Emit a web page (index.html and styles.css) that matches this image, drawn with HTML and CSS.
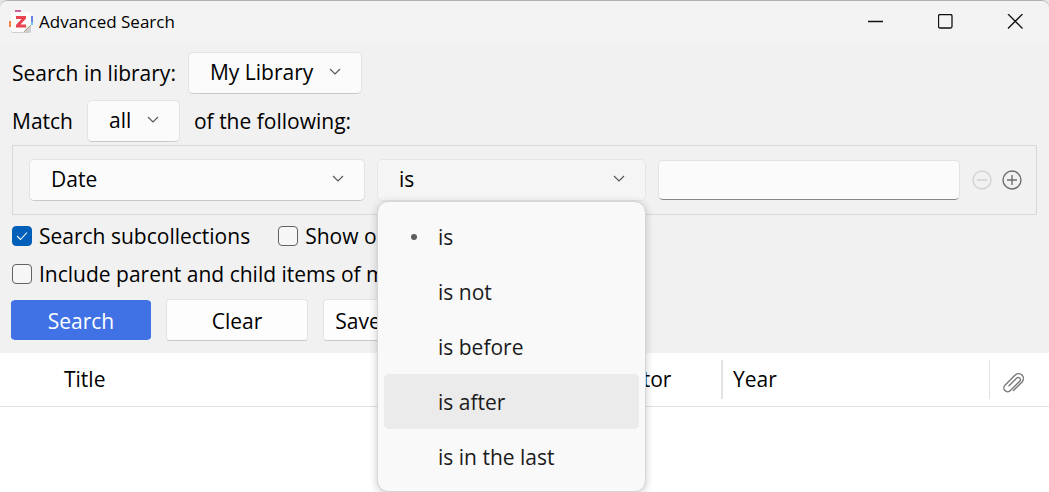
FILE: index.html
```html
<!DOCTYPE html>
<html lang="en">
<head>
<meta charset="utf-8">
<title>Advanced Search</title>
<link rel="stylesheet" href="styles.css">
</head>
<body>
<div class="window">
  <header class="titlebar">
    <svg class="app-icon" viewBox="0 0 24 24" aria-hidden="true">
      <rect x="6" y="0" width="6" height="4" fill="#c9629b"/>
      <rect x="0" y="11" width="4" height="6" fill="#f4814a"/>
      <rect x="20" y="6" width="4" height="9" fill="#6a7ee0"/>
      <rect x="21" y="12" width="3" height="3" fill="#6ec6e8"/>
      <rect x="2" y="4" width="20" height="19" rx="2" fill="#cfcfcf"/>
      <path d="M4 2H20Q22 2 22 4V15L15 22H4Q2 22 2 20V4Q2 2 4 2Z" fill="#fbfbfb"/>
      <path d="M22 15L15 22Q17 19 16 16Q19 17 22 15Z" fill="#e3e3df"/>
      <path d="M22 15L15 22" stroke="#a8a28a" stroke-width="1"/>
      <path d="M7 6H17V8.500L11.500 14.500H17V17.500H7V15L12.500 9H7Z" fill="#e9434f"/>
    </svg>
    <h1 class="caption">Advanced Search</h1>
    <div class="window-controls">
      <button class="window-button" type="button" aria-label="Minimize">
        <svg class="window-glyph" viewBox="0 0 16 16"><path d="M0 7.500H15"/></svg>
      </button>
      <button class="window-button" type="button" aria-label="Maximize">
        <svg class="window-glyph" viewBox="0 0 16 16"><rect x=".5" y=".5" width="13.500" height="13.500" rx="1.500"/></svg>
      </button>
      <button class="window-button" type="button" aria-label="Close">
        <svg class="window-glyph" viewBox="0 0 16 16"><path d="M1 0L15.500 14.500M15.500 0L1 14.500"/></svg>
      </button>
    </div>
  </header>

  <form class="search-form">
    <div class="line library-line">
      <label for="library">Search in library:</label>
      <span class="dropdown">
        <select class="select" id="library"><option>My Library</option></select>
        <svg class="chevron" viewBox="0 0 12 8"><path d="M1 1L6 6L11 1"/></svg>
      </span>
    </div>
    <div class="line match-line">
      <label for="match">Match</label>
      <span class="dropdown">
        <select class="select" id="match"><option>all</option></select>
        <svg class="chevron" viewBox="0 0 12 8"><path d="M1 1L6 6L11 1"/></svg>
      </span>
      <span class="match-suffix">of the following:</span>
    </div>

    <div class="conditions">
      <span class="dropdown field">
        <select class="select" aria-label="Field"><option>Date</option></select>
        <svg class="chevron" viewBox="0 0 12 8"><path d="M1 1L6 6L11 1"/></svg>
      </span>
      <span class="dropdown operator">
        <select class="select open" aria-label="Operator"><option>is</option></select>
        <svg class="chevron" viewBox="0 0 12 8"><path d="M1 1L6 6L11 1"/></svg>
        <span class="menu" role="listbox" aria-label="Operator options">
          <button class="menu-item current" type="button" role="option" aria-selected="true">is</button>
          <button class="menu-item" type="button" role="option">is not</button>
          <button class="menu-item" type="button" role="option">is before</button>
          <button class="menu-item hovered" type="button" role="option">is after</button>
          <button class="menu-item" type="button" role="option">is in the last</button>
        </span>
      </span>
      <input class="value" type="text" aria-label="Value">
      <span class="row-buttons">
        <button class="round-button" type="button" aria-label="Remove condition" disabled>
          <svg class="round-glyph" viewBox="0 0 20 20"><circle cx="10" cy="10" r="9"/><path d="M5 10H15"/></svg>
        </button>
        <button class="round-button" type="button" aria-label="Add condition">
          <svg class="round-glyph" viewBox="0 0 20 20"><circle cx="10" cy="10" r="9"/><path d="M5 10H15M10 5V15"/></svg>
        </button>
      </span>
    </div>

    <div class="options">
      <label class="option"><span class="tick"><input class="checkbox" type="checkbox" checked><svg class="tick-mark" viewBox="0 0 12 10"><path d="M1 5L4.500 8.500L11 1.500"/></svg></span>Search subcollections</label>
      <label class="option"><input class="checkbox" type="checkbox">Show only top-level items</label>
    </div>
    <div class="options">
      <label class="option"><input class="checkbox" type="checkbox">Include parent and child items of matching items</label>
    </div>

    <div class="actions">
      <button class="button primary" type="button">Search</button>
      <button class="button" type="button">Clear</button>
      <button class="button save" type="button">Save Search</button>
    </div>
  </form>

  <main class="results">
    <table class="items">
      <thead>
        <tr>
          <th class="col-title" scope="col"><span class="head">Title</span></th>
          <th class="col-creator" scope="col"><span class="head">Creator</span></th>
          <th class="col-year" scope="col"><span class="head">Year</span></th>
          <th class="col-attachment" scope="col" aria-label="Attachments"><span class="head">
            <svg class="clip" viewBox="0 0 24 24"><path d="M11.500 20.500L20.300 11.700A4.900 4.900 0 0 0 13.400 4.800L3 15.200A3.800 3.800 0 0 0 8.400 20.600L17.900 11.100A2.200 2.200 0 0 0 14.800 8L7 15.800"/></svg>
          </span></th>
        </tr>
      </thead>
    </table>
  </main>
</div>
</body>
</html>
```
FILE: styles.css
```css
* {
  box-sizing: border-box;
}

body {
  margin: 0;
  background: #e4e4e4;
  color: #000;
  font: 21px/30px "Open Sans", "Noto Sans", sans-serif;
}

button,
input,
select {
  margin: 0;
  color: inherit;
  font: inherit;
}

.window {
  display: flex;
  flex-direction: column;
  min-height: 100vh;
  overflow: hidden;
  border-top: 1px solid #b0b0b0;
  border-radius: 8px 8px 0 0;
  background: #f1f1f1;
}

.titlebar {
  display: flex;
  align-items: center;
  height: 41px;
  padding-left: 9px;
  background: #f3f3f3;
}

.app-icon {
  width: 24px;
  height: 24px;
}

.caption {
  flex: 1;
  margin: 0 0 0 6px;
  font-size: 17px;
  font-weight: 400;
}

.window-controls {
  display: flex;
}

.window-button {
  display: grid;
  place-items: center;
  width: 70px;
  height: 40px;
  padding: 0;
  border: 0;
  background: none;
}

.window-button:last-child {
  width: 68px;
}

.window-glyph {
  width: 16px;
  height: 16px;
  fill: none;
  stroke: #111;
  stroke-width: 1.3;
}

.search-form {
  padding: 10px 12px 12px;
}

.line {
  display: flex;
  align-items: center;
}

.library-line {
  gap: 12px;
}

.match-line {
  gap: 14px;
  margin-top: 6px;
}

.dropdown {
  position: relative;
  display: grid;
  align-items: center;
}

.select {
  grid-area: 1 / 1;
  width: 100%;
  height: 42px;
  padding: 0 47px 2px 21px;
  border: 1px solid #e3e3e3;
  border-bottom-color: #c9c9c9;
  border-radius: 5px;
  background: #fbfbfb;
  appearance: none;
}

.select.open {
  border-color: #e6e6e6;
  background: #f5f5f5;
}

.chevron {
  grid-area: 1 / 1;
  justify-self: end;
  width: 12px;
  height: 8px;
  margin: 0 21px 3px 0;
  fill: none;
  stroke: #555;
  stroke-width: 1.1;
  pointer-events: none;
}

.conditions {
  display: grid;
  grid-template-columns: 336fr 269fr 302fr auto;
  gap: 12px;
  align-items: center;
  margin-top: 3px;
  padding: 13px 14px 13px 16px;
  border: 1px solid #d9d9d9;
}

.value {
  width: 100%;
  height: 40px;
  padding: 0 12px;
  border: 1px solid #e3e3e3;
  border-bottom-color: #868686;
  border-radius: 5px;
  background: #fbfbfb;
}

.row-buttons {
  display: flex;
  gap: 10px;
}

.round-button {
  display: grid;
  width: 20px;
  height: 20px;
  padding: 0;
  border: 0;
  background: none;
  color: #6e6e6e;
}

.round-button:disabled {
  color: #d2d2d2;
}

.round-glyph {
  width: 20px;
  height: 20px;
  fill: none;
  stroke: currentColor;
  stroke-width: 1.4;
}

.menu {
  position: absolute;
  z-index: 1;
  top: 100%;
  left: 0;
  width: 100%;
  padding: 7px 6px;
  border: 1px solid #d6d6d6;
  border-radius: 11px;
  background: #f9f9f9;
  box-shadow: 0 2px 8px rgba(0, 0, 0, 0.2);
  background-clip: padding-box;
}

.menu-item {
  display: flex;
  align-items: center;
  width: 100%;
  height: 55px;
  padding: 0 0 0 54px;
  border: 0;
  border-radius: 5px;
  background: none;
  color: #1b1b1b;
}

.menu-item.hovered {
  background: #ebebeb;
}

.menu-item.current {
  gap: 21px;
  padding-left: 27px;
}

.menu-item.current::before {
  width: 6px;
  height: 6px;
  border-radius: 50%;
  background: #5c5c5c;
  content: "";
}

.options {
  display: flex;
  gap: 28px;
  margin-top: 8px;
}

.conditions + .options {
  margin-top: 6px;
}

.option {
  display: flex;
  gap: 7px;
  align-items: center;
  white-space: nowrap;
}

.tick {
  display: grid;
  place-items: center;
}

.checkbox {
  grid-area: 1 / 1;
  width: 20px;
  height: 20px;
  border: 1px solid #626262;
  border-radius: 4px;
  background: #f6f6f6;
  appearance: none;
}

.checkbox:checked {
  border-color: #005fb8;
  background: #005fb8;
}

.tick-mark {
  grid-area: 1 / 1;
  width: 12px;
  height: 10px;
  fill: none;
  stroke: #fff;
  stroke-width: 1.1;
  pointer-events: none;
}

.actions {
  display: flex;
  gap: 15px;
  margin: 10px 0 0 -1px;
}

.button {
  min-width: 142px;
  height: 42px;
  padding: 2px 10px 0;
  border: 1px solid #e3e3e3;
  border-bottom-color: #c9c9c9;
  border-radius: 4px;
  background: #fdfdfd;
}

.button.primary {
  min-width: 140px;
  border-color: #f1f1f1;
  border-width: 1px 0;
  background: #4072e5;
  background-clip: padding-box;
  color: #fff;
}

.results {
  flex: 1;
  background: #fff;
}

.items {
  width: 100%;
  border-collapse: collapse;
  table-layout: fixed;
}

.items th {
  height: 53px;
  padding: 0;
  border-bottom: 1px solid #e0e0e0;
  font-weight: 400;
  text-align: left;
}

.head {
  display: flex;
  align-items: center;
  height: 39px;
  padding-left: 10px;
}

.col-title {
  width: 56%;
}

.col-title .head {
  padding-left: 64px;
}

.col-year {
  width: 268px;
}

.col-year .head {
  border-left: 2px solid #e2e2e2;
}

.col-attachment {
  width: 60px;
}

.col-attachment .head {
  padding-left: 12px;
  border-left: 1px solid #e2e2e2;
}

.clip {
  width: 24px;
  height: 24px;
  margin-top: 6px;
  fill: none;
  stroke: #777;
  stroke-width: 1.4;
  stroke-linecap: round;
}
```
